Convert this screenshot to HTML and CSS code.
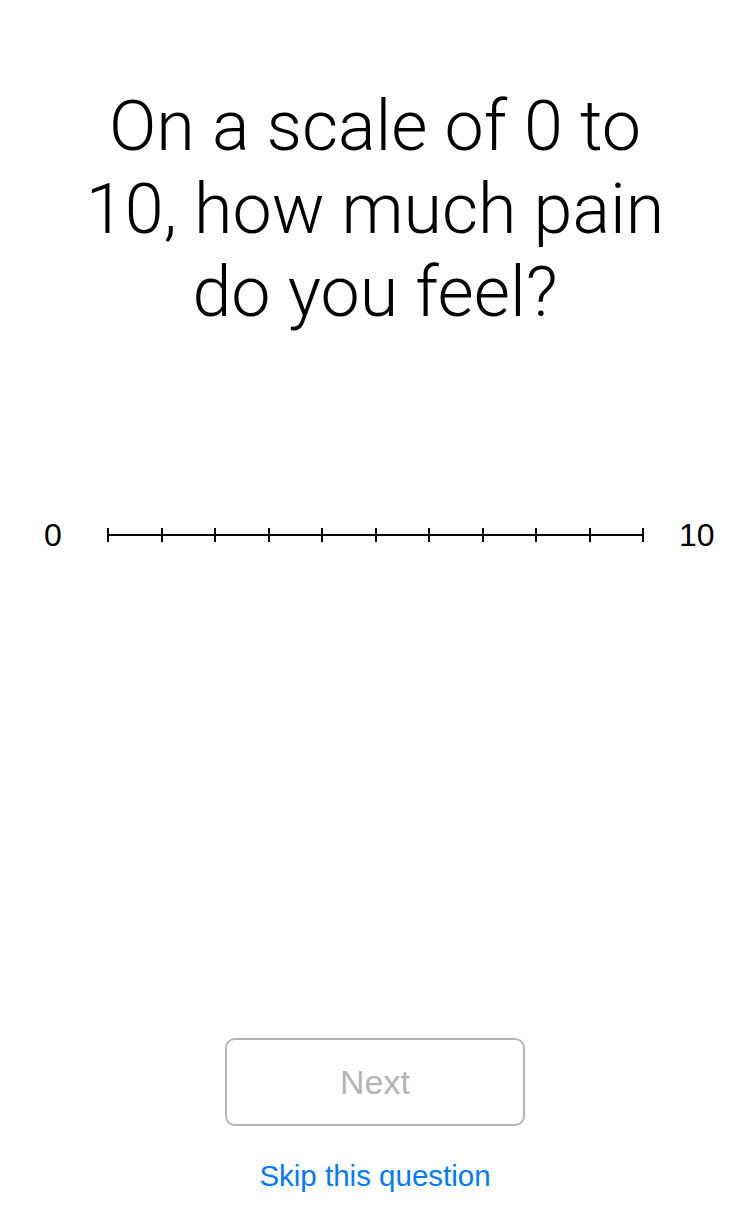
FILE: index.html
```html
<!DOCTYPE html>
<html lang="en">
<head>
<meta charset="utf-8">
<title>Pain scale</title>
<link rel="stylesheet" href="styles.css">
</head>
<body>
<main class="screen">
  <h1 class="question">On a scale of 0 to<br>10, how much pain<br>do you feel?</h1>
  <div class="scale">
    <span class="scale-label scale-min">0</span>
    <div class="track">
      <i class="tick"></i><i class="tick"></i><i class="tick"></i><i class="tick"></i>
      <i class="tick"></i><i class="tick"></i><i class="tick"></i><i class="tick"></i>
      <i class="tick"></i><i class="tick"></i><i class="tick"></i>
    </div>
    <span class="scale-label scale-max">10</span>
  </div>
  <button class="next" type="button" disabled>Next</button>
  <a class="skip" href="#">Skip this question</a>
</main>
</body>
</html>
```

FILE: styles.css
```css
html, body {
  margin: 0;
  padding: 0;
  background: #ffffff;
}

.screen {
  width: 750px;
  height: 1226px;
  display: flex;
  flex-direction: column;
  align-items: center;
  box-sizing: border-box;
  padding-bottom: 32px;
}

.question {
  margin: 85px 0 0;
  font-family: Roboto, "Liberation Sans", sans-serif;
  font-weight: 300;
  font-size: 70px;
  line-height: 83px;
  text-align: center;
  color: #000000;
}

.scale {
  margin-top: 181px;
  width: 750px;
  height: 40px;
  display: flex;
  align-items: center;
  box-sizing: border-box;
  padding-left: 44px;
}

.scale-label {
  font-family: "Liberation Sans", Arial, sans-serif;
  font-size: 32px;
  line-height: 40px;
  color: #000000;
}

.scale-min {
  width: 63px;
}

.track {
  width: 537px;
  height: 14px;
  display: flex;
  justify-content: space-between;
  background: linear-gradient(#000000, #000000) center / 100% 2px no-repeat;
}

.tick {
  width: 2px;
  background: #000000;
}

.scale-max {
  margin-left: 35px;
}

.next {
  margin-top: auto;
  width: 300px;
  height: 88px;
  box-sizing: border-box;
  border: 2px solid #b4b4b4;
  border-radius: 10px;
  background: #ffffff;
  color: #b4b4b4;
  font-family: "Liberation Sans", Arial, sans-serif;
  font-size: 34px;
  padding: 0;
}

.skip {
  margin-top: 32px;
  font-family: "Liberation Sans", Arial, sans-serif;
  font-size: 29.5px;
  line-height: 36px;
  color: #007aff;
  text-decoration: none;
}
```
